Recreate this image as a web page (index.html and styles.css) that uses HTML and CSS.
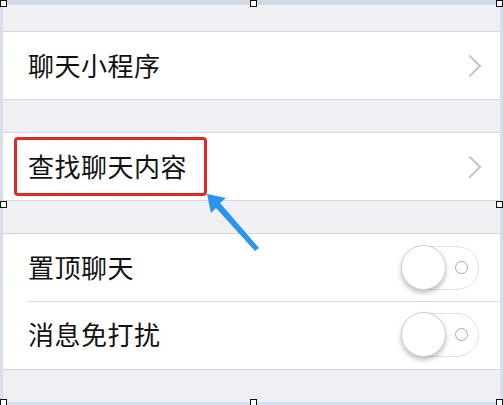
FILE: index.html
```html
<!DOCTYPE html>
<html lang="zh">
<head>
    <meta charset="UTF-8">
    <title>聊天设置</title>
    <link rel="stylesheet" href="styles.css">
</head>
<body>
    <div class="frame">
        <div class="group">
            <div class="cell">
                <span class="label">聊天小程序</span>
                <span class="chevron"></span>
            </div>
        </div>

        <div class="group">
            <div class="cell">
                <span class="label marked">查找聊天内容</span>
                <span class="chevron"></span>
            </div>
        </div>

        <div class="group">
            <div class="cell">
                <span class="label">置顶聊天</span>
                <span class="switch"><span class="knob"></span><span class="dot"></span></span>
            </div>
            <div class="cell">
                <span class="label">消息免打扰</span>
                <span class="switch"><span class="knob"></span><span class="dot"></span></span>
            </div>
        </div>

        <!-- pointer arrow -->
        <svg class="arrow" width="70" height="70" viewBox="0 0 70 70">
            <polygon points="2,2 21,6 15,11 54,56 50,59 11,16 6,21" fill="#2b93f0"/>
        </svg>

        <!-- selection handles -->
        <span class="handle h-tl"></span>
        <span class="handle h-tm"></span>
        <span class="handle h-tr"></span>
        <span class="handle h-ml"></span>
        <span class="handle h-mr"></span>
        <span class="handle h-bl"></span>
        <span class="handle h-bm"></span>
        <span class="handle h-br"></span>
    </div>
</body>
</html>
```

FILE: styles.css
```css
body {
    margin: 0;
    padding: 0;
    font-family: "Noto Sans CJK SC", "Noto Sans", sans-serif;
    background: #efeff4;
    overflow: hidden;
}

.frame {
    position: relative;
    height: 405px;
    box-sizing: border-box;
    border-top: 5px solid #d2dae7;
    border-left: 3px solid #d7dfeb;
    border-right: 3px solid #d7dfeb;
    border-bottom: 3px solid #d7dfeb;
    background: #efeff4;
    padding-top: 26px;
}

.group {
    background: white;
    border-top: 1px solid #d6d6db;
    border-bottom: 1px solid #d6d6db;
    margin-bottom: 32px;
}

.cell {
    display: flex;
    align-items: center;
    justify-content: space-between;
    height: 67px;
    padding: 0 22px 0 25px;
    position: relative;
}

.cell + .cell {
    height: 68px;
}

.cell + .cell::before {
    content: "";
    position: absolute;
    top: 0;
    left: 25px;
    right: 0;
    border-top: 1px solid #dcdce0;
}

.label {
    font-size: 26px;
    color: #111;
    letter-spacing: 0.5px;
    margin-top: -3px;
}

.marked {
    position: relative;
}

.marked::after {
    content: "";
    position: absolute;
    left: -14px;
    right: -20px;
    top: -10px;
    bottom: -12px;
    border: 3px solid #e4282a;
    border-radius: 4px;
}

.chevron {
    width: 14px;
    height: 14px;
    border-top: 2px solid #c4c4c9;
    border-right: 2px solid #c4c4c9;
    transform: rotate(45deg);
    margin-right: 0;
}

.switch {
    position: relative;
    width: 77px;
    height: 44px;
    border: 1.5px solid #e2e2e2;
    border-radius: 24px;
    box-sizing: border-box;
    margin-right: -1px;
}

.knob {
    position: absolute;
    left: -2px;
    top: -2px;
    width: 45px;
    height: 45px;
    border-radius: 50%;
    background: white;
    border: 1px solid #d0d0d0;
    box-sizing: border-box;
    box-shadow: 0 3px 5px rgba(0, 0, 0, 0.25);
}

.dot {
    position: absolute;
    right: 10px;
    top: 14px;
    width: 13px;
    height: 13px;
    border: 1.5px solid #a9a9a9;
    border-radius: 50%;
    box-sizing: border-box;
}

.arrow {
    position: absolute;
    left: 202px;
    top: 187px;
}

.handle {
    position: absolute;
    width: 5px;
    height: 5px;
    background: white;
    border: 1px solid #111;
}

.h-tl { left: -3px; top: -5px; }
.h-tm { left: 247px; top: -5px; }
.h-tr { right: -3px; top: -5px; }
.h-ml { left: -3px; top: 196px; }
.h-mr { right: -3px; top: 196px; }
.h-bl { left: -3px; bottom: -4px; }
.h-bm { left: 247px; bottom: -4px; }
.h-br { right: -3px; bottom: -4px; }
```
